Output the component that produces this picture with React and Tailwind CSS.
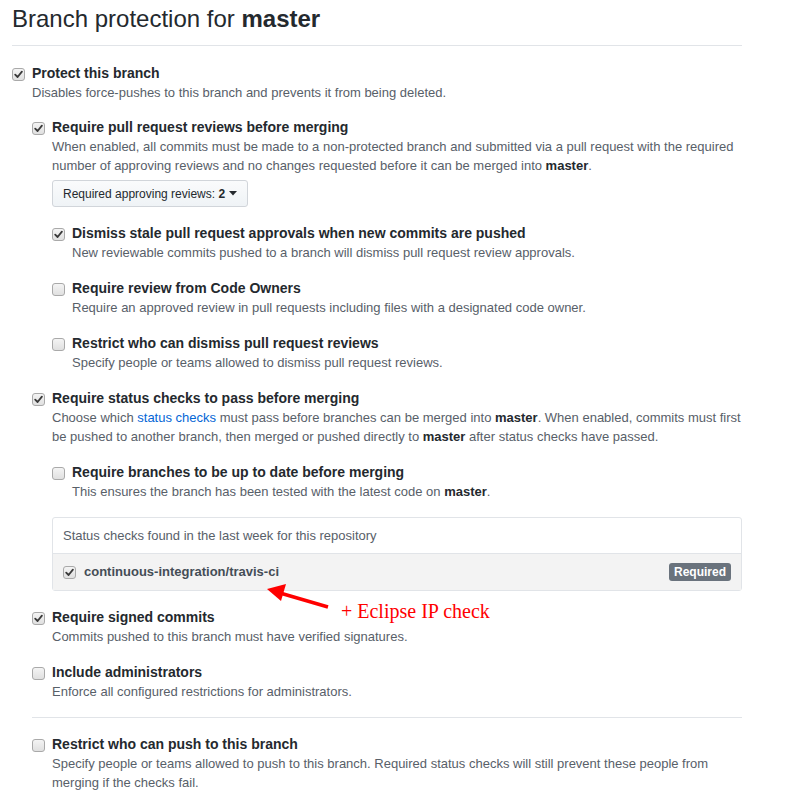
import React from 'react'

const font = { fontFamily: '"Liberation Sans", Arial, sans-serif' }

function Check({ checked }) {
  return (
    <span className="mt-[1px] flex h-[13px] w-[13px] shrink-0 items-center justify-center rounded-[3px] border border-[#a9a9a9] bg-gradient-to-b from-[#f4f4f4] to-[#e0e0e0]">
      {checked && (
        <svg width="9" height="9" viewBox="0 0 9 9">
          <path d="M1.2 4.6 L3.6 7 L7.9 1.6" fill="none" stroke="#3a3a3a" strokeWidth="1.8" strokeLinecap="round" strokeLinejoin="round" />
        </svg>
      )}
    </span>
  )
}

function Option({ checked, label, children, className = '' }) {
  return (
    <div className={'flex gap-[7px] ' + className}>
      <div className="pt-[4px]">
        <Check checked={checked} />
      </div>
      <div className="min-w-0 flex-1">
        <div className="text-[14px] font-bold leading-[20px] text-[#24292e]">{label}</div>
        {children}
      </div>
    </div>
  )
}

function Note({ children }) {
  return <p className="text-[13px] leading-[19px] text-[#586069]">{children}</p>
}

export default function App() {
  return (
    <div className="relative min-h-[804px] w-[792px] bg-white" style={font}>
      <div className="w-[742px] pl-[12px] pt-[4px]">
        <h2 className="border-b border-[#e1e4e8] pb-[11px] text-[24px] font-normal leading-[30px] text-[#24292e]">
          Branch protection for <b>master</b>
        </h2>

        <Option checked label="Protect this branch" className="mt-[17px]">
          <Note>Disables force-pushes to this branch and prevents it from being deleted.</Note>

          <Option checked label="Require pull request reviews before merging" className="mt-[15px]">
            <Note>
              When enabled, all commits must be made to a non-protected branch and submitted via a pull request with the required number of approving reviews and no changes requested before it can be merged into <b className="text-[#24292e]">master</b>.
            </Note>
            <button className="mt-[5px] flex h-[27px] items-center rounded-[3px] border border-[#d1d5da] bg-gradient-to-b from-[#fafbfc] to-[#eff3f6] px-[10px] text-[12px] text-[#24292e]">
              Required approving reviews:&nbsp;<b>2</b>
              <svg className="ml-[4px]" width="8" height="5" viewBox="0 0 8 5"><path d="M0 0 L8 0 L4 4.5 Z" fill="#24292e" /></svg>
            </button>

            <Option checked label="Dismiss stale pull request approvals when new commits are pushed" className="mt-[16px]">
              <Note>New reviewable commits pushed to a branch will dismiss pull request review approvals.</Note>
            </Option>
            <Option label="Require review from Code Owners" className="mt-[16px]">
              <Note>Require an approved review in pull requests including files with a designated code owner.</Note>
            </Option>
            <Option label="Restrict who can dismiss pull request reviews" className="mt-[16px]">
              <Note>Specify people or teams allowed to dismiss pull request reviews.</Note>
            </Option>
          </Option>

          <Option checked label="Require status checks to pass before merging" className="mt-[16px]">
            <Note>
              Choose which <span className="text-[#0366d6]">status checks</span> must pass before branches can be merged into <b className="text-[#24292e]">master</b>. When enabled, commits must first be pushed to another branch, then merged or pushed directly to <b className="text-[#24292e]">master</b> after status checks have passed.
            </Note>
            <Option label="Require branches to be up to date before merging" className="mt-[16px]">
              <Note>This ensures the branch has been tested with the latest code on <b className="text-[#24292e]">master</b>.</Note>
            </Option>
            <div className="mt-[16px] rounded-[3px] border border-[#e1e4e8]">
              <div className="h-[36px] border-b border-[#e1e4e8] px-[10px] text-[13px] leading-[35px] text-[#586069]">
                Status checks found in the last week for this repository
              </div>
              <div className="flex h-[36px] items-center bg-[#f3f3f3] pl-[10px] pr-[10px]">
                <Check checked />
                <span className="ml-[8px] flex-1 text-[13px] font-bold text-[#444d56]">continuous-integration/travis-ci</span>
                <span className="rounded-[3px] bg-[#6a737d] px-[5px] text-[12px] font-bold leading-[18px] text-white">Required</span>
              </div>
            </div>
          </Option>

          <Option checked label="Require signed commits" className="mt-[16px]">
            <Note>Commits pushed to this branch must have verified signatures.</Note>
          </Option>
          <Option label="Include administrators" className="mt-[16px]">
            <Note>Enforce all configured restrictions for administrators.</Note>
          </Option>
          <div className="mt-[16px] border-t border-[#e1e4e8]" />
          <Option label="Restrict who can push to this branch" className="mt-[16px]">
            <Note>
              Specify people or teams allowed to push to this branch. Required status checks will still prevent these people from merging if the checks fail.
            </Note>
          </Option>
        </Option>
      </div>

      <svg className="absolute left-[262px] top-[582px]" width="72" height="30" viewBox="0 0 72 30">
        <line x1="66" y1="25" x2="18" y2="11" stroke="#ff0000" strokeWidth="3.5" />
        <path d="M5 7 L24 2 L19 19 Z" fill="#ff0000" />
      </svg>
      <div
        className="absolute left-[341px] top-[598px] text-[20px] leading-[26px] text-[#ff0000]"
        style={{ fontFamily: '"Liberation Serif", "Times New Roman", serif' }}
      >
        + Eclipse IP check
      </div>
    </div>
  )
}
